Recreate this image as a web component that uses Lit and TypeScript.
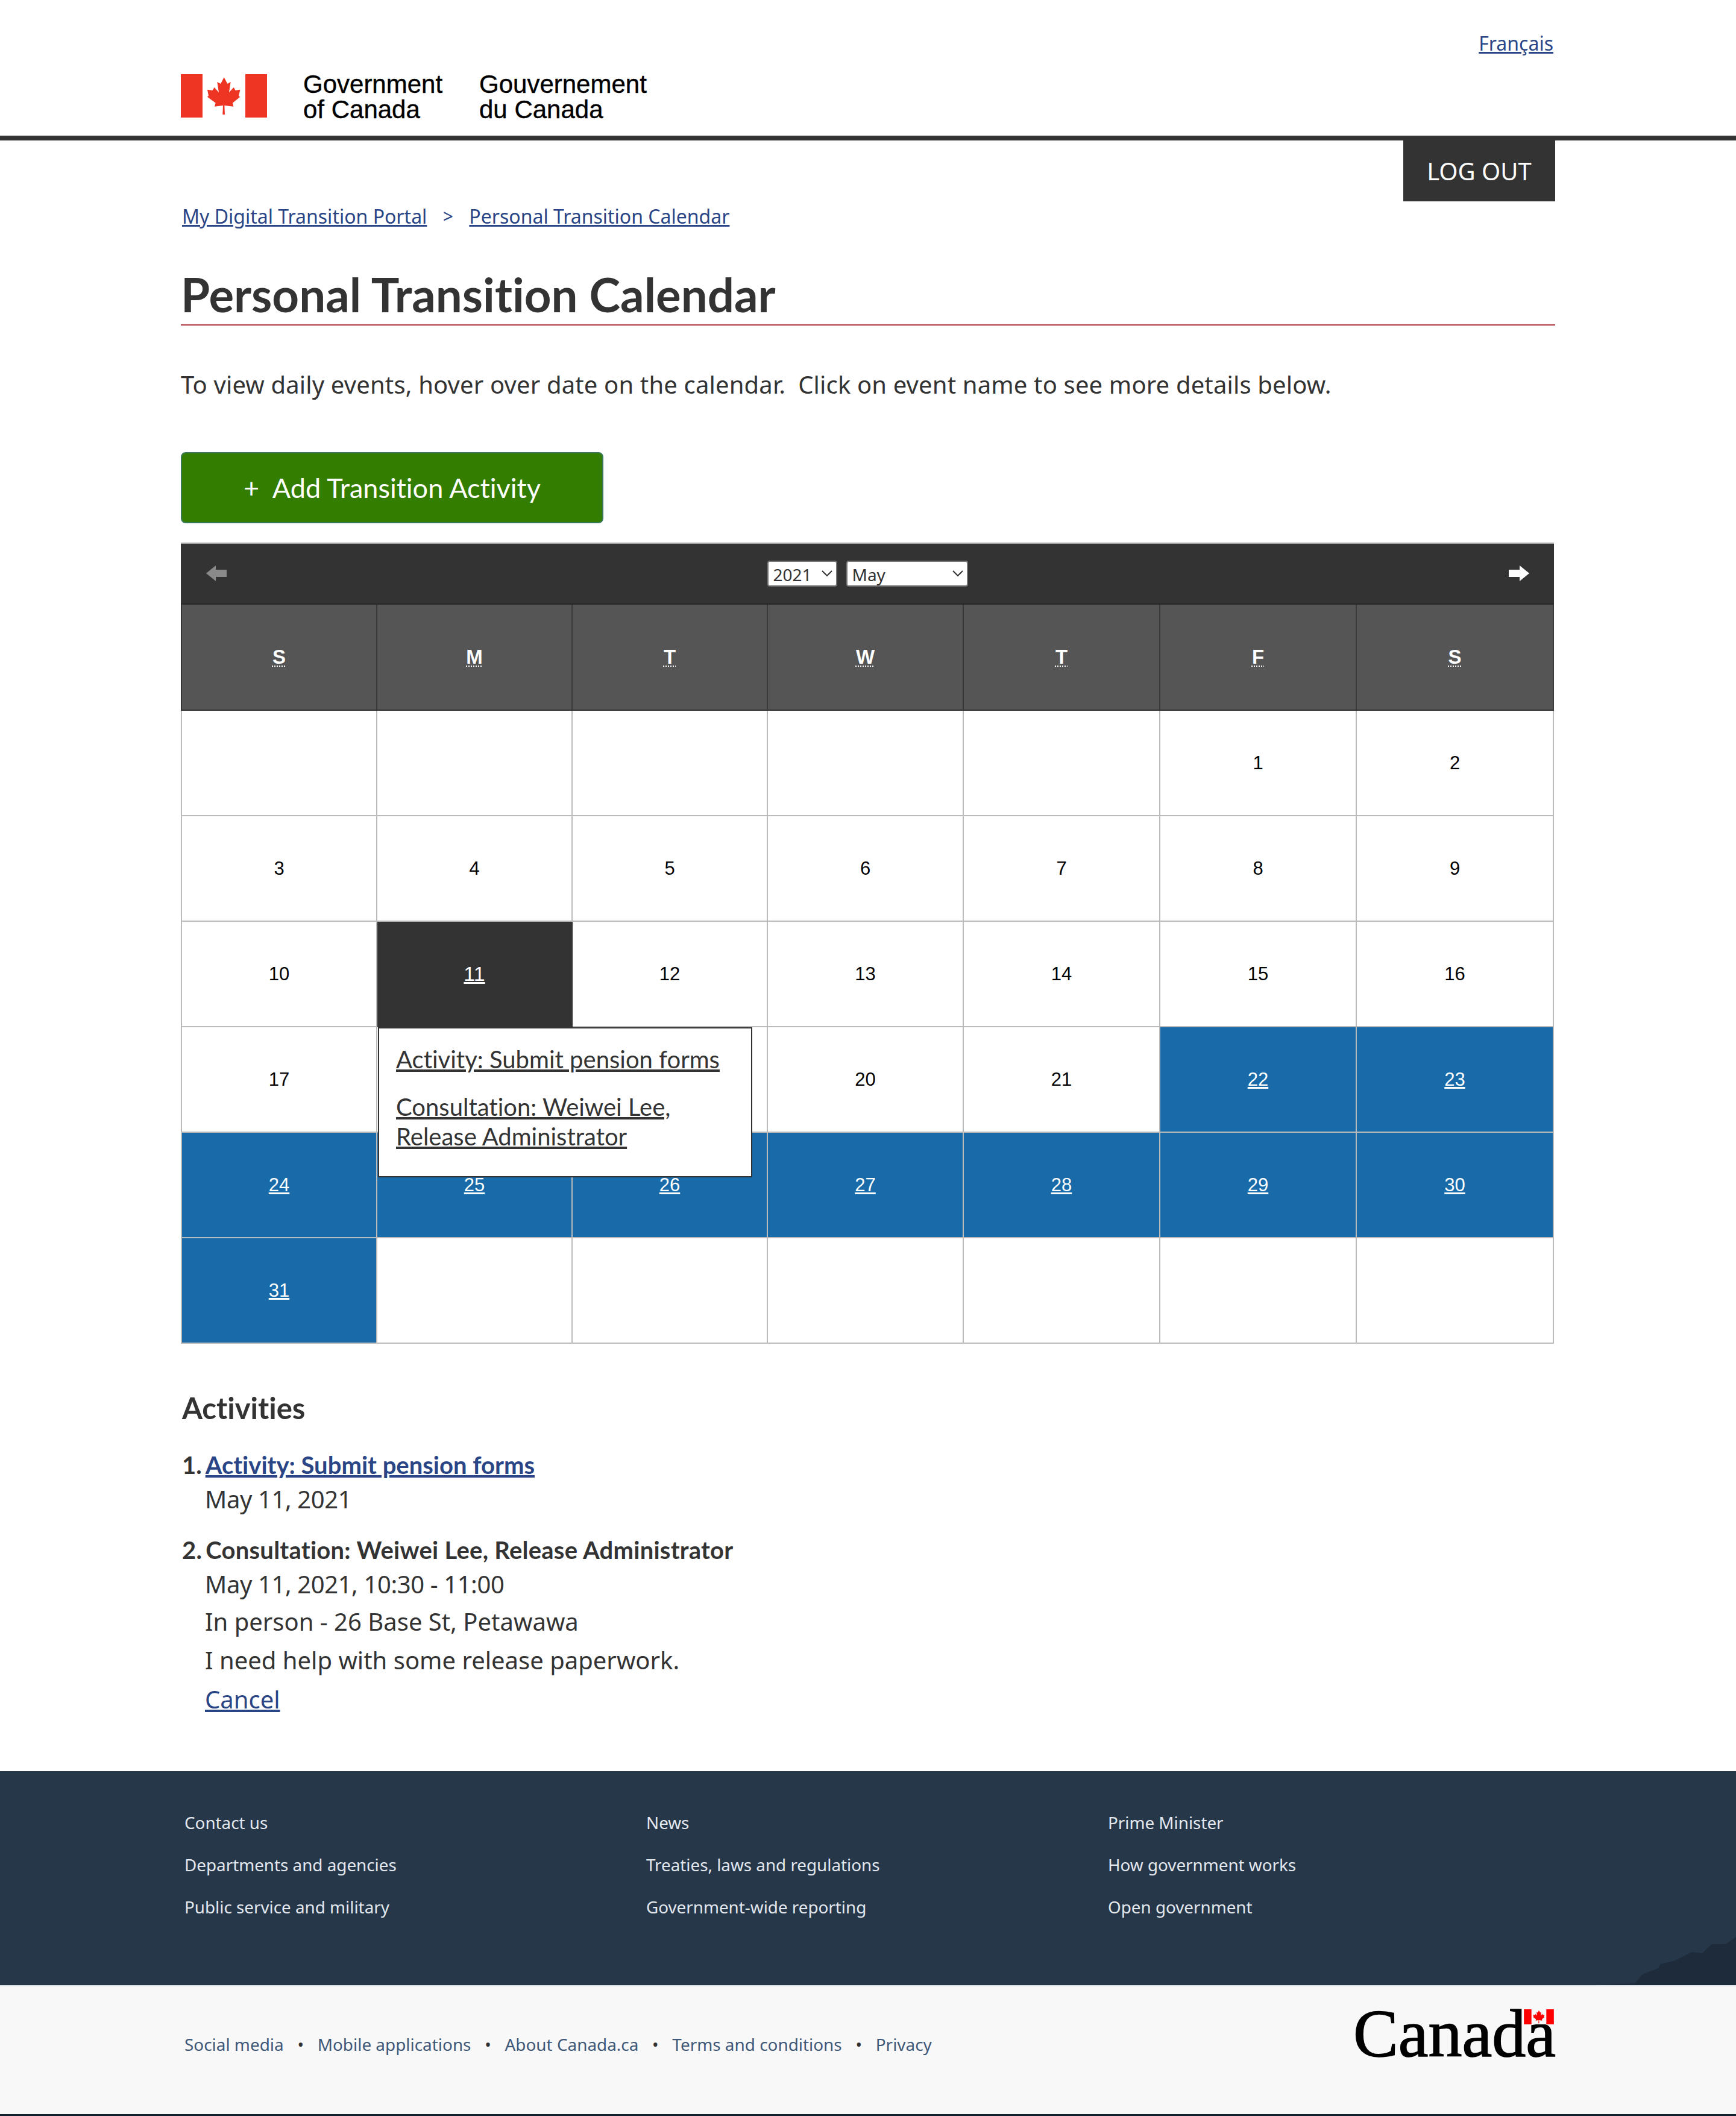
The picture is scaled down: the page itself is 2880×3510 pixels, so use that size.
import { LitElement, html, css, svg } from 'lit';
import { customElement } from 'lit/decorators.js';

// ── Personal Transition Calendar ─────────────────────────────────────────────
//
// Government of Canada page: signature header, month calendar with an open
// day popup, activities list and two-band footer.

const LEAF =
  '215,16 232,48 248,39 240,91 263,66 272,81 295,77 288,109 295,113 258,143 262,161 217,156 219,201 208,201 210,156 168,161 173,143 132,113 138,107 132,77 157,81 167,66 189,91 181,39 198,48';

const flag = (color: string) => svg`
  <rect x="0" y="0" width="108" height="216" fill=${color}></rect>
  <rect x="321" y="0" width="108" height="216" fill=${color}></rect>
  <polygon points=${LEAF} fill=${color}></polygon>
`;

const DAY_NAMES = ['S', 'M', 'T', 'W', 'T', 'F', 'S'];
const COLUMN_WIDTHS = [326, 324, 324, 325, 326, 326, 327];
const FIRST_OFFSET = 5;
const DAYS_IN_MONTH = 31;
const CELL_COUNT = 42;
const TODAY = 11;
const FIRST_BOOKED = 22;

const FOOTER_COLUMNS = [
  ['Contact us', 'Departments and agencies', 'Public service and military'],
  ['News', 'Treaties, laws and regulations', 'Government-wide reporting'],
  ['Prime Minister', 'How government works', 'Open government'],
];

const LEGAL_LINKS = ['Social media', 'Mobile applications', 'About Canada.ca', 'Terms and conditions', 'Privacy'];

@customElement('app-root')
export class AppRoot extends LitElement {
  static styles = css`
    :host {
      display: block;
      width: 100%;
      min-height: 3510px;
      background: #fff;
      color: #333;
      font-family: 'Noto Sans', sans-serif;
      font-size: 40px;
      font-variant-ligatures: none;
    }

    * {
      box-sizing: border-box;
    }

    a {
      color: #2a4585;
      text-decoration: underline;
    }

    .wrap {
      width: 2280px;
      margin: 0 auto;
    }

    /* header */
    .top {
      height: 233px;
      border-bottom: 8px solid #333;
    }

    .lang {
      display: flex;
      justify-content: flex-end;
      padding: 50px 3px 0 0;
      height: 123px;
      font-size: 32px;
      line-height: 44px;
    }

    .signature {
      display: flex;
      align-items: flex-start;
    }

    .flag {
      display: block;
      width: 143px;
      height: 72px;
    }

    .wordmark {
      font-family: 'Liberation Sans', sans-serif;
      font-size: 42px;
      line-height: 42px;
      color: #000;
      margin-top: -4px;
      -webkit-text-stroke: 0.4px #000;
    }

    .wordmark.en {
      margin-left: 60px;
      width: 292px;
    }

    /* main */
    .logout-row {
      display: flex;
      justify-content: flex-end;
    }

    .logout {
      width: 252px;
      height: 101px;
      background: #333;
      color: #fff;
      display: flex;
      align-items: center;
      justify-content: center;
      font-size: 40px;
    }

    .crumbs {
      display: flex;
      padding-left: 2px;
      margin-top: 3px;
      font-size: 32px;
      line-height: 44px;
    }

    .crumbs span {
      width: 70px;
      text-align: center;
      color: #2a4585;
      font-size: 30px;
    }

    h1 {
      font-family: Lato, sans-serif;
      font-weight: 700;
      font-size: 78px;
      line-height: 96px;
      margin: 59px 0 0;
      padding-bottom: 2px;
      border-bottom: 2px solid #af3c43;
      color: #333;
    }

    .intro {
      margin: 70px 0 0;
      line-height: 56px;
      letter-spacing: 0.15px;
      white-space: pre;
    }

    .add {
      display: flex;
      align-items: center;
      justify-content: center;
      width: 701px;
      height: 118px;
      margin-top: 84px;
      background: #337d00;
      border: 2px solid #39795a;
      border-radius: 8px;
      color: #fff;
      font-family: Lato, sans-serif;
      font-size: 45px;
      white-space: pre;
    }

    /* calendar */
    .calendar {
      position: relative;
      width: 2278px;
      margin-top: 32px;
      font-family: 'Liberation Sans', sans-serif;
    }

    .cal-nav {
      position: relative;
      display: flex;
      align-items: center;
      justify-content: center;
      gap: 15px;
      height: 103px;
      background: #333;
      border-top: 2px solid #aaa;
      border-bottom: 3px solid #2a2a2a;
    }

    .arrow {
      position: absolute;
      top: 36px;
      width: 34px;
      height: 26px;
    }

    .arrow.prev {
      left: 42px;
    }

    .arrow.next {
      right: 41px;
    }

    /* doubled with zoom so the native chevron comes out at the reference size */
    select {
      zoom: 2;
      font-family: 'Noto Sans', sans-serif;
      font-size: 14px;
      height: 21.5px;
      padding: 0;
      background: #fff;
      color: #333;
      border: 1px solid #777;
      border-radius: 2px;
    }

    .year {
      width: 58px;
    }

    .month {
      width: 101px;
    }

    .grid {
      display: grid;
      grid-auto-rows: 175px;
    }

    .grid.head {
      grid-auto-rows: 176px;
    }

    .head-cell {
      display: flex;
      align-items: center;
      justify-content: center;
      background: #555;
      border-right: 2px solid #3a3a3a;
      border-bottom: 2px solid #333;
      color: #fff;
      font-weight: 700;
      font-size: 33px;
    }

    .head-cell:first-child {
      border-left: 2px solid #333;
    }

    .head-cell abbr {
      text-decoration: underline dotted 2px;
      text-underline-offset: 3px;
    }

    .cell {
      display: flex;
      align-items: center;
      justify-content: center;
      background: #fff;
      border-right: 2px solid #bbb;
      border-bottom: 2px solid #bbb;
      color: #000;
      font-size: 31px;
    }

    .cell.first {
      border-left: 2px solid #bbb;
    }

    .cell.today {
      background: #333;
      font-size: 34px;
      border-bottom-color: #333;
      border-right-color: #333;
    }

    .cell.booked {
      background: #186ba8;
    }

    .cell a {
      color: #fff;
    }

    .popup {
      position: absolute;
      left: 327px;
      top: 804px;
      width: 621px;
      height: 249px;
      padding: 27px 28px 0;
      background: #fff;
      border: 2px solid #333;
      font-family: Lato, sans-serif;
      font-size: 40px;
      line-height: 49px;
    }

    .popup a {
      display: block;
      color: #333;
    }

    .popup a + a {
      margin-top: 30px;
    }

    /* activities */
    h2 {
      font-family: Lato, sans-serif;
      font-weight: 700;
      font-size: 49px;
      line-height: 60px;
      margin: 76px 0 0 2px;
      color: #333;
    }

    .activity {
      margin: 0 0 0 2px;
    }

    .activity.one {
      margin-top: 38px;
    }

    .activity.two {
      margin-top: 27px;
    }

    .activity-title {
      font-family: Lato, sans-serif;
      font-weight: 700;
      line-height: 54px;
      display: flex;
      gap: 6px;
    }

    .activity.two .activity-title {
      letter-spacing: 0.25px;
    }

    .activity-body {
      padding-left: 38px;
      line-height: 64px;
    }

    .activity-body.date {
      line-height: 60px;
      letter-spacing: -0.4px;
    }

    .activity-body:last-child:not(.date) {
      line-height: 66px;
    }

    /* footer */
    .footer-main {
      position: relative;
      height: 355px;
      margin-top: 86px;
      background: #26374a;
      overflow: hidden;
    }

    .landscape {
      position: absolute;
      right: 0;
      bottom: 0;
      width: 229px;
      height: 80px;
    }

    .footer-cols {
      display: grid;
      grid-template-columns: repeat(3, 766px);
      padding: 50px 0 0 6px;
    }

    .footer-cols a {
      display: block;
      color: #e3e8ee;
      font-size: 27.8px;
      line-height: 70px;
      text-decoration: none;
    }

    .footer-legal {
      height: 217px;
      background: #f8f8f8;
      border-top: 2px solid #dfe3e8;
      border-bottom: 3px solid #10202f;
    }

    .legal-row {
      display: flex;
      justify-content: space-between;
      align-items: flex-start;
      padding-left: 6px;
    }

    .legal-links {
      display: flex;
      align-items: center;
      margin-top: 74px;
      line-height: 44px;
      font-size: 27.9px;
    }

    .legal-links a {
      color: #3f5878;
      text-decoration: none;
    }

    .legal-links i {
      width: 56px;
      text-align: center;
      font-style: normal;
      color: #333;
      font-size: 28px;
    }

    .canada {
      position: relative;
      width: 334px;
      height: 80px;
      margin: 38px 1px 0 0;
      font-family: 'Liberation Serif', serif;
      font-size: 112px;
      line-height: 80px;
      color: #000;
      -webkit-text-stroke: 1.5px #000;
    }

    .canada svg {
      position: absolute;
      right: 1px;
      top: 0;
      width: 50px;
      height: 25px;
    }
  `;

  private renderCells() {
    return Array.from({ length: CELL_COUNT }, (_, i) => {
      const day = i - FIRST_OFFSET + 1;
      const valid = day >= 1 && day <= DAYS_IN_MONTH;
      const booked = valid && day >= FIRST_BOOKED;
      const today = day === TODAY;
      const classes = ['cell', i % 7 === 0 ? 'first' : '', booked ? 'booked' : '', today ? 'today' : ''].join(' ');
      return html`<div class=${classes}>
        ${!valid ? '' : booked || today ? html`<a href="#">${day}</a>` : day}
      </div>`;
    });
  }

  render() {
    const columns = COLUMN_WIDTHS.map(w => `${w}px`).join(' ');
    return html`
      <header class="top">
        <div class="wrap">
          <div class="lang"><a href="#">Français</a></div>
          <div class="signature">
            <svg class="flag" viewBox="0 0 429 216">${flag('#ee3524')}</svg>
            <div class="wordmark en">Government<br />of Canada</div>
            <div class="wordmark">Gouvernement<br />du Canada</div>
          </div>
        </div>
      </header>

      <main class="wrap">
        <div class="logout-row"><div class="logout">LOG OUT</div></div>
        <nav class="crumbs">
          <a href="#">My Digital Transition Portal</a>
          <span>&gt;</span>
          <a href="#">Personal Transition Calendar</a>
        </nav>
        <h1>Personal Transition Calendar</h1>
        <p class="intro">To view daily events, hover over date on the calendar.  Click on event name to see more details below.</p>
        <div class="add">+  Add Transition Activity</div>

        <section class="calendar">
          <div class="cal-nav">
            <svg class="arrow prev" viewBox="0 0 34 26">
              <polygon points="0,13 16,0 16,7 34,7 34,19 16,19 16,26" fill="#8a8a8a"></polygon>
            </svg>
            <select class="year"><option>2021</option></select>
            <select class="month"><option>May</option></select>
            <svg class="arrow next" viewBox="0 0 34 26">
              <polygon points="34,13 18,0 18,7 0,7 0,19 18,19 18,26" fill="#fff"></polygon>
            </svg>
          </div>
          <div class="grid head" style="grid-template-columns: ${columns}">
            ${DAY_NAMES.map(d => html`<div class="head-cell"><abbr>${d}</abbr></div>`)}
          </div>
          <div class="grid" style="grid-template-columns: ${columns}">${this.renderCells()}</div>
          <div class="popup">
            <a href="#">Activity: Submit pension forms</a>
            <a href="#">Consultation: Weiwei Lee,<br />Release Administrator</a>
          </div>
        </section>

        <h2>Activities</h2>
        <div class="activity one">
          <div class="activity-title"><span>1.</span><a href="#">Activity: Submit pension forms</a></div>
          <div class="activity-body date">May 11, 2021</div>
        </div>
        <div class="activity two">
          <div class="activity-title"><span>2.</span><span>Consultation: Weiwei Lee, Release Administrator</span></div>
          <div class="activity-body date">May 11, 2021, 10:30 - 11:00</div>
          <div class="activity-body">In person - 26 Base St, Petawawa</div>
          <div class="activity-body">I need help with some release paperwork.</div>
          <div class="activity-body"><a href="#">Cancel</a></div>
        </div>
      </main>

      <footer>
        <div class="footer-main">
          <svg class="landscape" viewBox="0 0 229 80">
            <polygon
              points="0,80 61,77 74,62 100,52 104,45 126,40 156,25 173,27 189,12 212,12 229,0 229,80"
              fill="#1d2b3b"
            ></polygon>
          </svg>
          <div class="wrap footer-cols">
            ${FOOTER_COLUMNS.map(
              col => html`<div>${col.map(label => html`<a href="#">${label}</a>`)}</div>`,
            )}
          </div>
        </div>
        <div class="footer-legal">
          <div class="wrap legal-row">
            <div class="legal-links">
              ${LEGAL_LINKS.map(
                (label, i) => html`${i > 0 ? html`<i>•</i>` : ''}<a href="#">${label}</a>`,
              )}
            </div>
            <div class="canada">
              Canada
              <svg viewBox="0 0 429 216">
                <rect x="108" width="213" height="216" fill="#f8f8f8"></rect>
                ${flag('#f00')}
              </svg>
            </div>
          </div>
        </div>
      </footer>
    `;
  }
}
